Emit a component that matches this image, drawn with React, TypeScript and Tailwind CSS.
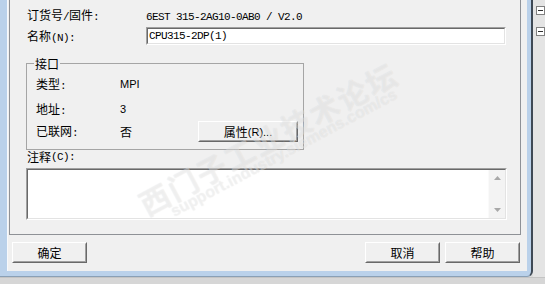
import React from "react";

const CJK_SPLIT = /([\u2e80-\u9fff\uff00-\uffef]+)/;
const CJK_TEST = /[\u2e80-\u9fff\uff00-\uffef]/;

function Sim({ text }: { text: string }) {
  const parts = text.split(CJK_SPLIT).filter((p) => p.length > 0);
  return (
    <>
      {parts.map((p, i) =>
        CJK_TEST.test(p) ? (
          <span key={i} className="[font-family:'Noto_Sans_CJK_SC',sans-serif] text-[12px]">
            {p}
          </span>
        ) : (
          <span
            key={i}
            className="[font-family:'Liberation_Mono',monospace] text-[11px] tracking-[-0.6px] whitespace-pre"
          >
            {p}
          </span>
        )
      )}
    </>
  );
}

function Tah({ text }: { text: string }) {
  return <span className="[font-family:'Liberation_Sans',sans-serif] text-[11px]">{text}</span>;
}

function Btn({ children, w, h }: { children: React.ReactNode; w: string; h: string }) {
  return (
    <div
      className={`${w} ${h} flex border border-t-white border-l-white border-r-[#696969] border-b-[#696969] bg-[#f0f0f0]`}
    >
      <div className="flex-1 flex items-center justify-center border border-t-[#f0f0f0] border-l-[#f0f0f0] border-r-[#a0a0a0] border-b-[#a0a0a0] text-black leading-[14px]">
        {children}
      </div>
    </div>
  );
}

function Sunken({ className, children }: { className: string; children?: React.ReactNode }) {
  return (
    <div
      className={`${className} flex border border-t-[#a0a0a0] border-l-[#a0a0a0] border-r-white border-b-white`}
    >
      <div className="flex-1 flex border border-t-[#696969] border-l-[#696969] border-r-[#e3e3e3] border-b-[#e3e3e3] bg-white">
        {children}
      </div>
    </div>
  );
}

export default function App() {
  return (
    <div className="relative w-[545px] h-[284px] overflow-hidden bg-[#dcdcdc] flex flex-col text-black">
      <div className="flex h-[277px]">
        {/* window */}
        <div className="w-[533px] h-[277px] flex flex-col bg-[#bad1ea] border-r-2 border-r-[#3e4955] border-b border-b-[#8aa0b6] rounded-br-[6px] pl-[7px] pr-[4px] pb-[5px]">
          {/* client */}
          <div className="w-[520px] h-[271px] bg-[#f0f0f0] border-l border-l-[#f7f9fc] flex flex-col">
            {/* tab panel */}
            <div className="ml-[1px] w-[512px] h-[235px] border-l border-r border-b border-[#8e9196] pl-[16px] flex flex-col leading-[16px]">
              <div className="mt-[7px] h-[16px] flex items-center">
                <div className="w-[120px] pl-[1px]">
                  <Sim text="订货号/固件:" />
                </div>
                <div>
                  <Sim text="6EST 315-2AG10-0AB0 / V2.0" />
                </div>
              </div>
              <div className="mt-[4px] h-[18px] flex items-center">
                <div className="w-[120px] pl-[1px]">
                  <Sim text="名称(N):" />
                </div>
                <Sunken className="w-[360px] h-[18px]">
                  <div className="pl-[1px] flex items-center leading-[14px]">
                    <Sim text="CPU315-2DP(1)" />
                  </div>
                </Sunken>
              </div>
              {/* group box */}
              <div className="relative mt-[18px] w-[278px] h-[87px] border border-[#a5a5a5] pl-[9px] flex flex-col">
                <div className="absolute left-[7px] top-[-9px] px-[1px] bg-[#f0f0f0] leading-[16px]">
                  <Sim text="接口" />
                </div>
                <div className="mt-[12px] h-[16px] flex items-center">
                  <div className="w-[84px]">
                    <Sim text="类型:" />
                  </div>
                  <Tah text="MPI" />
                </div>
                <div className="mt-[9px] h-[16px] flex items-center">
                  <div className="w-[84px]">
                    <Sim text="地址:" />
                  </div>
                  <Tah text="3" />
                </div>
                <div className="mt-[4px] h-[21px] flex items-center">
                  <div className="w-[84px]">
                    <Sim text="已联网:" />
                  </div>
                  <div className="w-[78px]">
                    <Sim text="否" />
                  </div>
                  <Btn w="w-[100px]" h="h-[21px]">
                    <Sim text="属性" />
                    <Tah text="(R)..." />
                  </Btn>
                </div>
              </div>
              <div className="h-[14px] leading-[14px] pl-[1px] flex items-center">
                <Sim text="注释(C):" />
              </div>
              <Sunken className="mt-[4px] w-[481px] h-[52px]">
                <div className="flex-1" />
                <div className="w-[17px] bg-[#f3f3f3] border-l border-l-[#fafafa] flex flex-col justify-between items-center py-[6px]">
                  <svg width="7" height="4" viewBox="0 0 7 4">
                    <path d="M0 4 L3.5 0 L7 4 Z" fill="#a8a8a8" />
                  </svg>
                  <svg width="7" height="4" viewBox="0 0 7 4">
                    <path d="M0 0 L3.5 4 L7 0 Z" fill="#a8a8a8" />
                  </svg>
                </div>
              </Sunken>
            </div>
            {/* bottom buttons */}
            <div className="mt-[7px] ml-[4px] flex">
              <Btn w="w-[75px]" h="h-[21px]">
                <Sim text="确定" />
              </Btn>
              <div className="ml-[278px]">
                <Btn w="w-[75px]" h="h-[21px]">
                  <Sim text="取消" />
                </Btn>
              </div>
              <div className="ml-[5px]">
                <Btn w="w-[75px]" h="h-[21px]">
                  <Sim text="帮助" />
                </Btn>
              </div>
            </div>
          </div>
        </div>
        {/* background window strip */}
        <div className="flex-1 bg-[#e4e4e4] flex flex-col pt-[6px] pl-[3px] gap-[12px]">
          <div className="w-[9px] h-[9px] border border-[#808080] bg-white flex items-center justify-center">
            <div className="w-[5px] h-px bg-[#303030]" />
          </div>
          <div className="w-[9px] h-[9px] border border-[#808080] bg-white flex items-center justify-center">
            <div className="w-[5px] h-px bg-[#303030]" />
          </div>
        </div>
      </div>
      <div className="flex-1 bg-[#d6d6d6] border-t border-t-[#c4c4c4]" />

      {/* faint watermark overlay */}
      <div className="pointer-events-none absolute left-[268px] top-[138px] -translate-x-1/2 -translate-y-1/2 rotate-[-28deg] whitespace-nowrap [font-family:'Noto_Sans_CJK_SC',sans-serif] font-bold text-[30px] leading-[32px] tracking-[2px] text-white/40 [text-shadow:0_0_1px_rgba(0,0,0,0.1)]">
        西门子工业技术论坛
      </div>
      <div className="pointer-events-none absolute left-[284px] top-[153px] -translate-x-1/2 -translate-y-1/2 rotate-[-28deg] whitespace-nowrap [font-family:'Liberation_Sans',sans-serif] font-bold text-[16px] leading-[18px] text-white/40 [text-shadow:0_0_1px_rgba(0,0,0,0.1)]">
        support.industry.siemens.com/cs
      </div>
    </div>
  );
}
